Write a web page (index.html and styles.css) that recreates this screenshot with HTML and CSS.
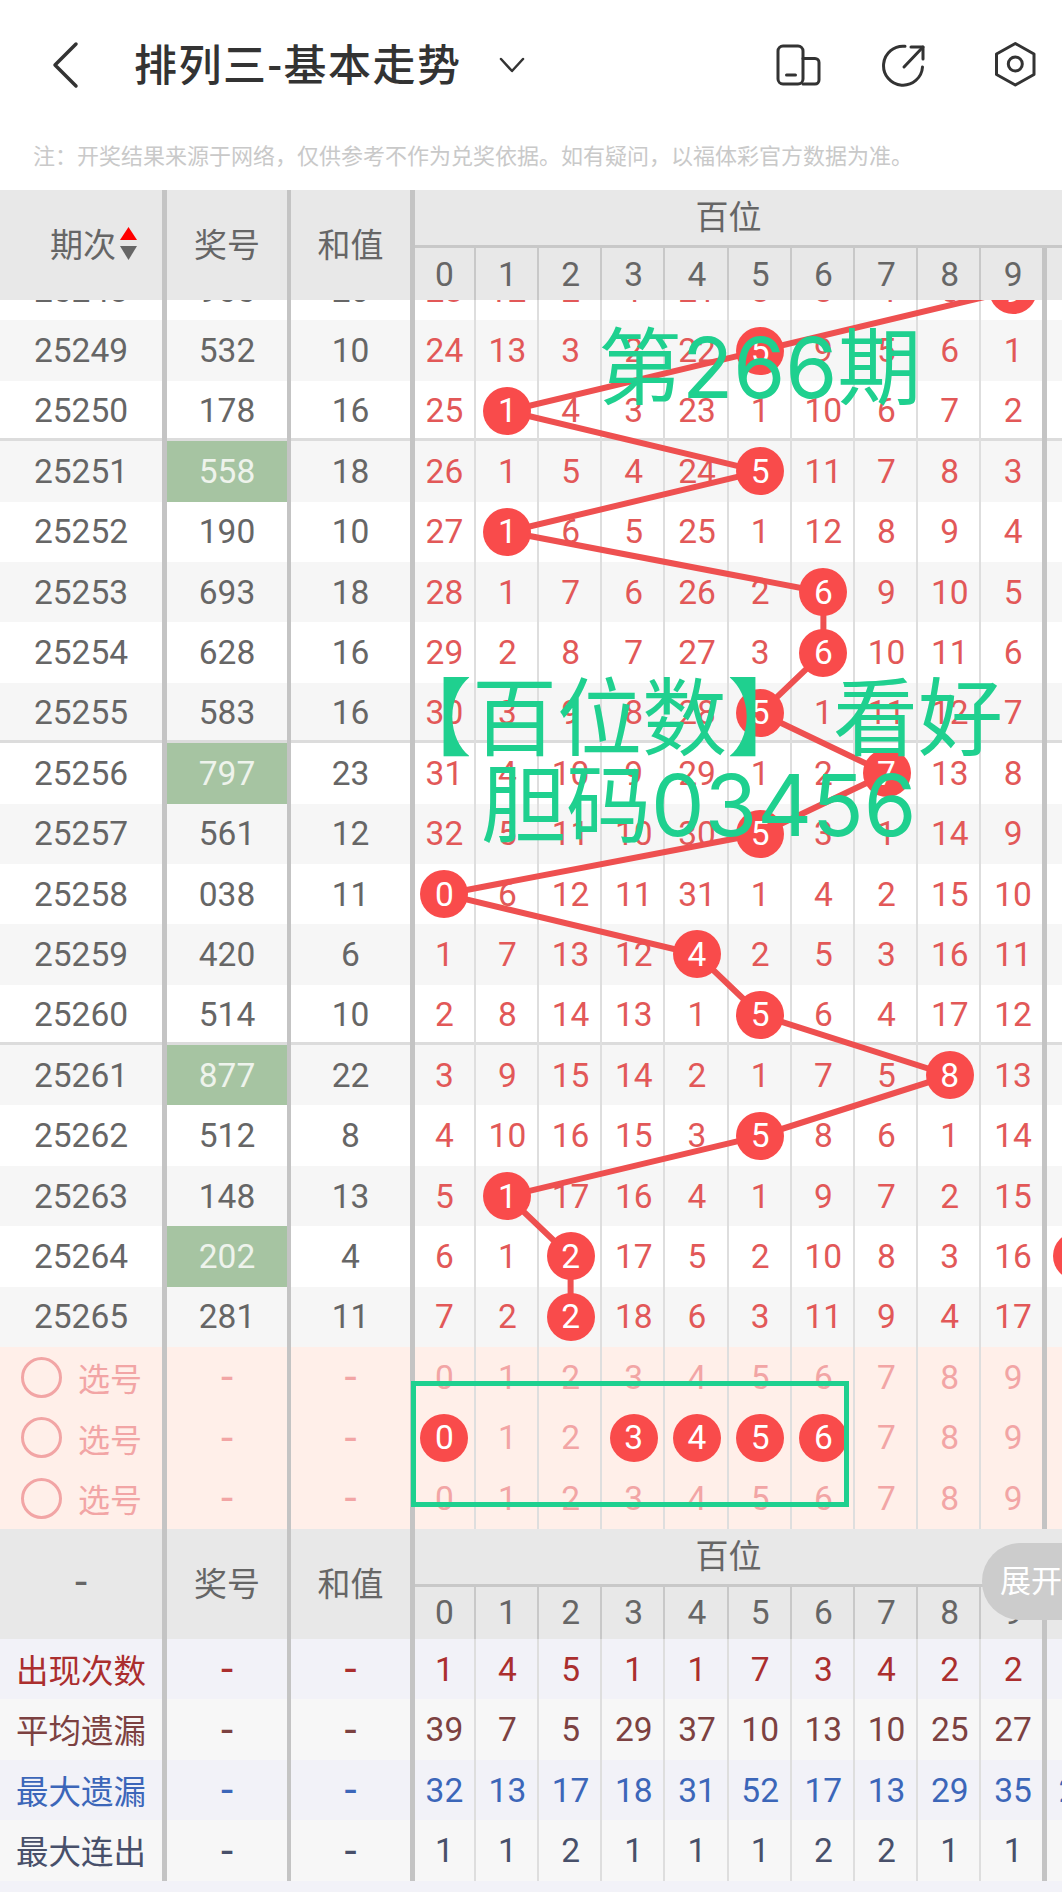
FILE: index.html
```html
<!DOCTYPE html>
<html lang="zh-CN">
<head>
	<meta charset="UTF-8">
	<title>排列三-基本走势</title>
	<link rel="stylesheet" href="styles.css">
</head>
<body>
	<div class="topbar">
		<svg class="back" width="30" height="50" viewBox="0 0 30 50"><path d="M26 4 L5 25 L26 46"/></svg>
		<div class="title">排列三-基本走势</div>
		<svg class="arrow" width="26" height="16" viewBox="0 0 26 16"><path d="M2 2 L13 14 L24 2"/></svg>
		<div class="tools">
			<svg width="48" height="48" viewBox="0 0 48 48"><rect x="4" y="5" width="25" height="38" rx="5"/><path d="M29 17.5h12a4 4 0 0 1 4 4V39a4 4 0 0 1-4 4H29"/><path d="M12.5 34h9"/></svg>
			<svg width="48" height="48" viewBox="0 0 48 48"><path d="M23 5.3A19.5 19.5 0 1 0 40.5 26"/><path d="M22 26L41 6"/><path d="M29 6H41V18"/></svg>
			<svg width="48" height="48" viewBox="0 0 48 48"><path d="M25.3 2.5L44 13V33.5L25.3 44L6.5 33.5V13Z"/><circle cx="25.3" cy="23" r="7"/></svg>
		</div>
	</div>
	<div class="note">注：开奖结果来源于网络，仅供参考不作为兑奖依据。如有疑问，以福体彩官方数据为准。</div>

	<div class="thead">
		<div class="ca sortable">期次<svg class="sort" width="17" height="33" viewBox="0 0 17 33"><polygon class="up" points="8.5,0 17,13 0,13"/><polygon class="down" points="0,19 17,19 8.5,33"/></svg></div>
		<div class="cb">奖号</div>
		<div class="cc">和值</div>
		<div class="pos">
			<div class="pos-title">百位</div>
			<div class="nums"><i>0</i><i>1</i><i>2</i><i>3</i><i>4</i><i>5</i><i>6</i><i>7</i><i>8</i><i>9</i><i></i></div>
		</div>
	</div>

	<div class="rows">
		<div class="rows-inner">
			<div class="row"><div class="ca">25248</div><div class="cb">965</div><div class="cc">20</div><div class="nums"><i>23</i><i>12</i><i>2</i><i>1</i><i>21</i><i>8</i><i>8</i><i>4</i><i>5</i><i><b>9</b></i><i></i></div></div>
			<div class="row"><div class="ca">25249</div><div class="cb">532</div><div class="cc">10</div><div class="nums"><i>24</i><i>13</i><i>3</i><i>2</i><i>22</i><i><b>5</b></i><i>9</i><i>5</i><i>6</i><i>1</i><i></i></div></div>
			<div class="row end"><div class="ca">25250</div><div class="cb">178</div><div class="cc">16</div><div class="nums"><i>25</i><i><b>1</b></i><i>4</i><i>3</i><i>23</i><i>1</i><i>10</i><i>6</i><i>7</i><i>2</i><i></i></div></div>
			<div class="row"><div class="ca">25251</div><div class="cb hit">558</div><div class="cc">18</div><div class="nums"><i>26</i><i>1</i><i>5</i><i>4</i><i>24</i><i><b>5</b></i><i>11</i><i>7</i><i>8</i><i>3</i><i></i></div></div>
			<div class="row"><div class="ca">25252</div><div class="cb">190</div><div class="cc">10</div><div class="nums"><i>27</i><i><b>1</b></i><i>6</i><i>5</i><i>25</i><i>1</i><i>12</i><i>8</i><i>9</i><i>4</i><i></i></div></div>
			<div class="row"><div class="ca">25253</div><div class="cb">693</div><div class="cc">18</div><div class="nums"><i>28</i><i>1</i><i>7</i><i>6</i><i>26</i><i>2</i><i><b>6</b></i><i>9</i><i>10</i><i>5</i><i></i></div></div>
			<div class="row"><div class="ca">25254</div><div class="cb">628</div><div class="cc">16</div><div class="nums"><i>29</i><i>2</i><i>8</i><i>7</i><i>27</i><i>3</i><i><b>6</b></i><i>10</i><i>11</i><i>6</i><i></i></div></div>
			<div class="row end"><div class="ca">25255</div><div class="cb">583</div><div class="cc">16</div><div class="nums"><i>30</i><i>3</i><i>9</i><i>8</i><i>28</i><i><b>5</b></i><i>1</i><i>11</i><i>12</i><i>7</i><i></i></div></div>
			<div class="row"><div class="ca">25256</div><div class="cb hit">797</div><div class="cc">23</div><div class="nums"><i>31</i><i>4</i><i>10</i><i>9</i><i>29</i><i>1</i><i>2</i><i><b>7</b></i><i>13</i><i>8</i><i></i></div></div>
			<div class="row"><div class="ca">25257</div><div class="cb">561</div><div class="cc">12</div><div class="nums"><i>32</i><i>5</i><i>11</i><i>10</i><i>30</i><i><b>5</b></i><i>3</i><i>1</i><i>14</i><i>9</i><i></i></div></div>
			<div class="row"><div class="ca">25258</div><div class="cb">038</div><div class="cc">11</div><div class="nums"><i><b>0</b></i><i>6</i><i>12</i><i>11</i><i>31</i><i>1</i><i>4</i><i>2</i><i>15</i><i>10</i><i></i></div></div>
			<div class="row"><div class="ca">25259</div><div class="cb">420</div><div class="cc">6</div><div class="nums"><i>1</i><i>7</i><i>13</i><i>12</i><i><b>4</b></i><i>2</i><i>5</i><i>3</i><i>16</i><i>11</i><i></i></div></div>
			<div class="row end"><div class="ca">25260</div><div class="cb">514</div><div class="cc">10</div><div class="nums"><i>2</i><i>8</i><i>14</i><i>13</i><i>1</i><i><b>5</b></i><i>6</i><i>4</i><i>17</i><i>12</i><i></i></div></div>
			<div class="row"><div class="ca">25261</div><div class="cb hit">877</div><div class="cc">22</div><div class="nums"><i>3</i><i>9</i><i>15</i><i>14</i><i>2</i><i>1</i><i>7</i><i>5</i><i><b>8</b></i><i>13</i><i></i></div></div>
			<div class="row"><div class="ca">25262</div><div class="cb">512</div><div class="cc">8</div><div class="nums"><i>4</i><i>10</i><i>16</i><i>15</i><i>3</i><i><b>5</b></i><i>8</i><i>6</i><i>1</i><i>14</i><i></i></div></div>
			<div class="row"><div class="ca">25263</div><div class="cb">148</div><div class="cc">13</div><div class="nums"><i>5</i><i><b>1</b></i><i>17</i><i>16</i><i>4</i><i>1</i><i>9</i><i>7</i><i>2</i><i>15</i><i></i></div></div>
			<div class="row"><div class="ca">25264</div><div class="cb hit">202</div><div class="cc">4</div><div class="nums"><i>6</i><i>1</i><i><b>2</b></i><i>17</i><i>5</i><i>2</i><i>10</i><i>8</i><i>3</i><i>16</i><i><b></b></i></div></div>
			<div class="row"><div class="ca">25265</div><div class="cb">281</div><div class="cc">11</div><div class="nums"><i>7</i><i>2</i><i><b>2</b></i><i>18</i><i>6</i><i>3</i><i>11</i><i>9</i><i>4</i><i>17</i><i></i></div></div>
		</div>
		<svg class="lines" width="1062" height="1047" viewBox="0 300 1062 1047">
			<polyline points="1013,290.2 760.2,350.6 507.4,411 760.2,471.4 507.4,531.8 823.4,592.2 823.4,652.6 760.2,713 886.6,773.4 760.2,833.8 444.4,894.2 697,954.6 760.2,1015 949.8,1075.4 760.2,1135.8 507.4,1196.2 570.6,1256.6 570.6,1317"/>
		</svg>
		<div class="mark mark1">第<span>266</span>期</div>
		<div class="mark mark2">【百位数】 看好</div>
		<div class="mark mark3">胆码<span>03456</span></div>
	</div>

	<div class="picks">
		<div class="row pick"><div class="ca"><em></em>选号</div><div class="cb dash">-</div><div class="cc dash">-</div><div class="nums"><i>0</i><i>1</i><i>2</i><i>3</i><i>4</i><i>5</i><i>6</i><i>7</i><i>8</i><i>9</i><i></i></div></div>
		<div class="row pick"><div class="ca"><em></em>选号</div><div class="cb dash">-</div><div class="cc dash">-</div><div class="nums"><i><b>0</b></i><i>1</i><i>2</i><i><b>3</b></i><i><b>4</b></i><i><b>5</b></i><i><b>6</b></i><i>7</i><i>8</i><i>9</i><i></i></div></div>
		<div class="row pick"><div class="ca"><em></em>选号</div><div class="cb dash">-</div><div class="cc dash">-</div><div class="nums"><i>0</i><i>1</i><i>2</i><i>3</i><i>4</i><i>5</i><i>6</i><i>7</i><i>8</i><i>9</i><i></i></div></div>
		<div class="box"></div>
	</div>

	<div class="thead">
		<div class="ca dash">-</div>
		<div class="cb">奖号</div>
		<div class="cc">和值</div>
		<div class="pos">
			<div class="pos-title">百位</div>
			<div class="nums"><i>0</i><i>1</i><i>2</i><i>3</i><i>4</i><i>5</i><i>6</i><i>7</i><i>8</i><i>9</i><i></i></div>
		</div>
		<div class="more">展开</div>
	</div>

	<div class="stats">
		<div class="row s1"><div class="ca">出现次数</div><div class="cb dash">-</div><div class="cc dash">-</div><div class="nums"><i>1</i><i>4</i><i>5</i><i>1</i><i>1</i><i>7</i><i>3</i><i>4</i><i>2</i><i>2</i><i></i></div></div>
		<div class="row s2"><div class="ca">平均遗漏</div><div class="cb dash">-</div><div class="cc dash">-</div><div class="nums"><i>39</i><i>7</i><i>5</i><i>29</i><i>37</i><i>10</i><i>13</i><i>10</i><i>25</i><i>27</i><i></i></div></div>
		<div class="row s3"><div class="ca">最大遗漏</div><div class="cb dash">-</div><div class="cc dash">-</div><div class="nums"><i>32</i><i>13</i><i>17</i><i>18</i><i>31</i><i>52</i><i>17</i><i>13</i><i>29</i><i>35</i><i>21</i></div></div>
		<div class="row s4"><div class="ca">最大连出</div><div class="cb dash">-</div><div class="cc dash">-</div><div class="nums"><i>1</i><i>1</i><i>2</i><i>1</i><i>1</i><i>1</i><i>2</i><i>2</i><i>1</i><i>1</i><i></i></div></div>
	</div>
</body>
</html>
```
FILE: styles.css
```css
*{
	margin:0;
	padding:0;
	box-sizing: border-box;
}
html,body{
	height: 100%;
}
body{
	width:1062px;
	height: 1892px;
	overflow: hidden;
	background: #f2f2f8;
	font-family: Roboto, "Noto Sans CJK SC", sans-serif;
	font-size: 33.5px;
	color: #666;
}
/* top bar */
.topbar{
	height: 130px;
	display: flex;
	align-items: center;
	background: #fff;
}
.topbar svg{
	fill: none;
	stroke: #333;
	stroke-linecap: round;
	stroke-linejoin: round;
}
.back{
	margin-left:50px;
	stroke-width: 3.5;
}
.title{
	margin-left:54px;
	padding-bottom:6px;
	font-size: 43px;
	letter-spacing: 1.5px;
	font-weight: 500;
	color: #333;
	white-space: nowrap;
}
.arrow{
	margin-left:37px;
	stroke-width: 2.5;
}
.tools{
	margin-left:auto;
	margin-right:24px;
	display: flex;
	gap:60px;
}
.tools svg{
	stroke-width: 3;
}
.note{
	height: 60px;
	padding:0 0 12px 33px;
	display: flex;
	align-items: center;
	background: #fff;
	font-size: 22px;
	color: #c9c9c9;
	white-space: nowrap;
}
/* table columns */
.thead,.row{
	display: flex;
}
.ca,.cb,.cc{
	flex: none;
	display: flex;
	align-items: center;
	justify-content: center;
	border-right:4px solid #c4c4c4;
}
.ca{
	width:167px;
	border-right-width: 5px;
}
.cb,.cc{
	width:124px;
}
.cc{
	border-right-width: 5px;
}
.dash{
	font-size: 44px;
}
.nums{
	display: grid;
	grid-template-columns: 60.8px repeat(8, 63.2px) 60.6px 66px;
	flex: none;
}
.nums i{
	font-style: normal;
	display: flex;
	align-items: center;
	justify-content: center;
	box-shadow: inset -2px 0 0 #dedede;
}
.nums i:first-child{
	padding-right:2px;
}
.nums i:nth-child(10){
	padding-left:3px;
	box-shadow: none;
}
.nums i:last-child{
	border-left:5px solid #c4c4c4;
	box-shadow: none;
}
/* header */
.thead{
	position: relative;
	height: 110px;
	background: #e8e8e8;
}
.thead .ca,.thead .cb,.thead .cc{
	font-size: 33px;
	padding-bottom:4px;
}
.thead .ca.dash{
	font-size: 44px;
}
.thead .ca.sortable{
	padding-left:4px;
}
.sort{
	margin:0 -21px 0 4px;
}
.sort .up{
	fill: #f00;
}
.sort .down{
	fill: #666;
}
.pos{
	flex: none;
}
.pos-title{
	height: 58px;
	padding-bottom:8px;
	display: flex;
	align-items: center;
	justify-content: center;
	width:627px;
	font-size: 33px;
}
.pos .nums{
	height: 52px;
	position: relative;
	box-shadow: 0 -3px 0 #c8c8c8;
}
.pos .nums i{
	box-shadow: inset -2px 0 0 #c8c8c8;
}
.pos .nums i:nth-child(10),.pos .nums i:last-child{
	box-shadow: none;
}
.more{
	position: absolute;
	left:982px;
	top:14px;
	width:100px;
	height: 77px;
	padding:0 0 6px 18px;
	display: flex;
	align-items: center;
	border-radius: 38px 0 0 38px;
	background: #ccc;
	color: #fff;
	font-size: 31px;
	white-space: nowrap;
}
/* rows */
.rows{
	position: relative;
	height: 1047px;
	overflow: hidden;
	background: #fff;
}
.rows-inner{
	margin-top:-40px;
}
.row{
	height: 60.4px;
}
.rows .row:nth-child(even){
	background: #f6f6f6;
}
.rows .row.end{
	box-shadow: inset 0 -3px 0 #dcdcdc;
}
.rows .nums{
	color: #e25858;
}
.hit{
	background: #a6c4a2;
	color: #eef3ec;
}
.nums b{
	position: relative;
	z-index: 2;
	flex: none;
	width:48px;
	height: 48px;
	border-radius: 50%;
	display: flex;
	align-items: center;
	justify-content: center;
	background: #f94b4b;
	color: #fff;
	font-weight: 400;
}
.lines{
	position: absolute;
	left:0;
	top:0;
	z-index: 1;
}
.lines polyline{
	fill: none;
	stroke: #ee5050;
	stroke-width: 6;
}
/* green overlay texts */
.mark{
	position: absolute;
	z-index: 3;
	font-size: 85px;
	line-height: 96px;
	color: #1fd08f;
	white-space: pre;
}
.mark span{
	font-family: Inter, sans-serif;
}
.mark1{
	left:598px;
	top:20px;
	font-size: 84px;
}
.mark2{
	left:387px;
	top:372px;
}
.mark3{
	left:481px;
	top:458px;
}
/* pick rows */
.picks{
	position: relative;
	background: #ffefe9;
	color: #f2a5a5;
}
.pick{
	height: 60.6px;
}
.pick .ca{
	justify-content: flex-start;
	padding:0 0 0 21px;
	gap:16px;
	font-size: 32px;
}
.pick em{
	width:41px;
	height: 41px;
	border:3px solid #f2a5a5;
	border-radius: 50%;
}
.box{
	position: absolute;
	left:411px;
	top:34px;
	width:438px;
	height: 126px;
	border:5px solid #1fd08f;
	z-index: 3;
}
/* stats */
.stats .row{
	height: 60.5px;
}
.stats .ca{
	font-size: 32.5px;
	padding-bottom:2px;
}
.s1,.s3{
	background: #f2f2f8;
}
.s2,.s4{
	background: #f7f7f7;
}
.s1{
	color: #ab2e2e;
}
.s2{
	color: #7c4141;
}
.s3{
	color: #3c66b9;
}
.s4{
	color: #48506a;
}
```
